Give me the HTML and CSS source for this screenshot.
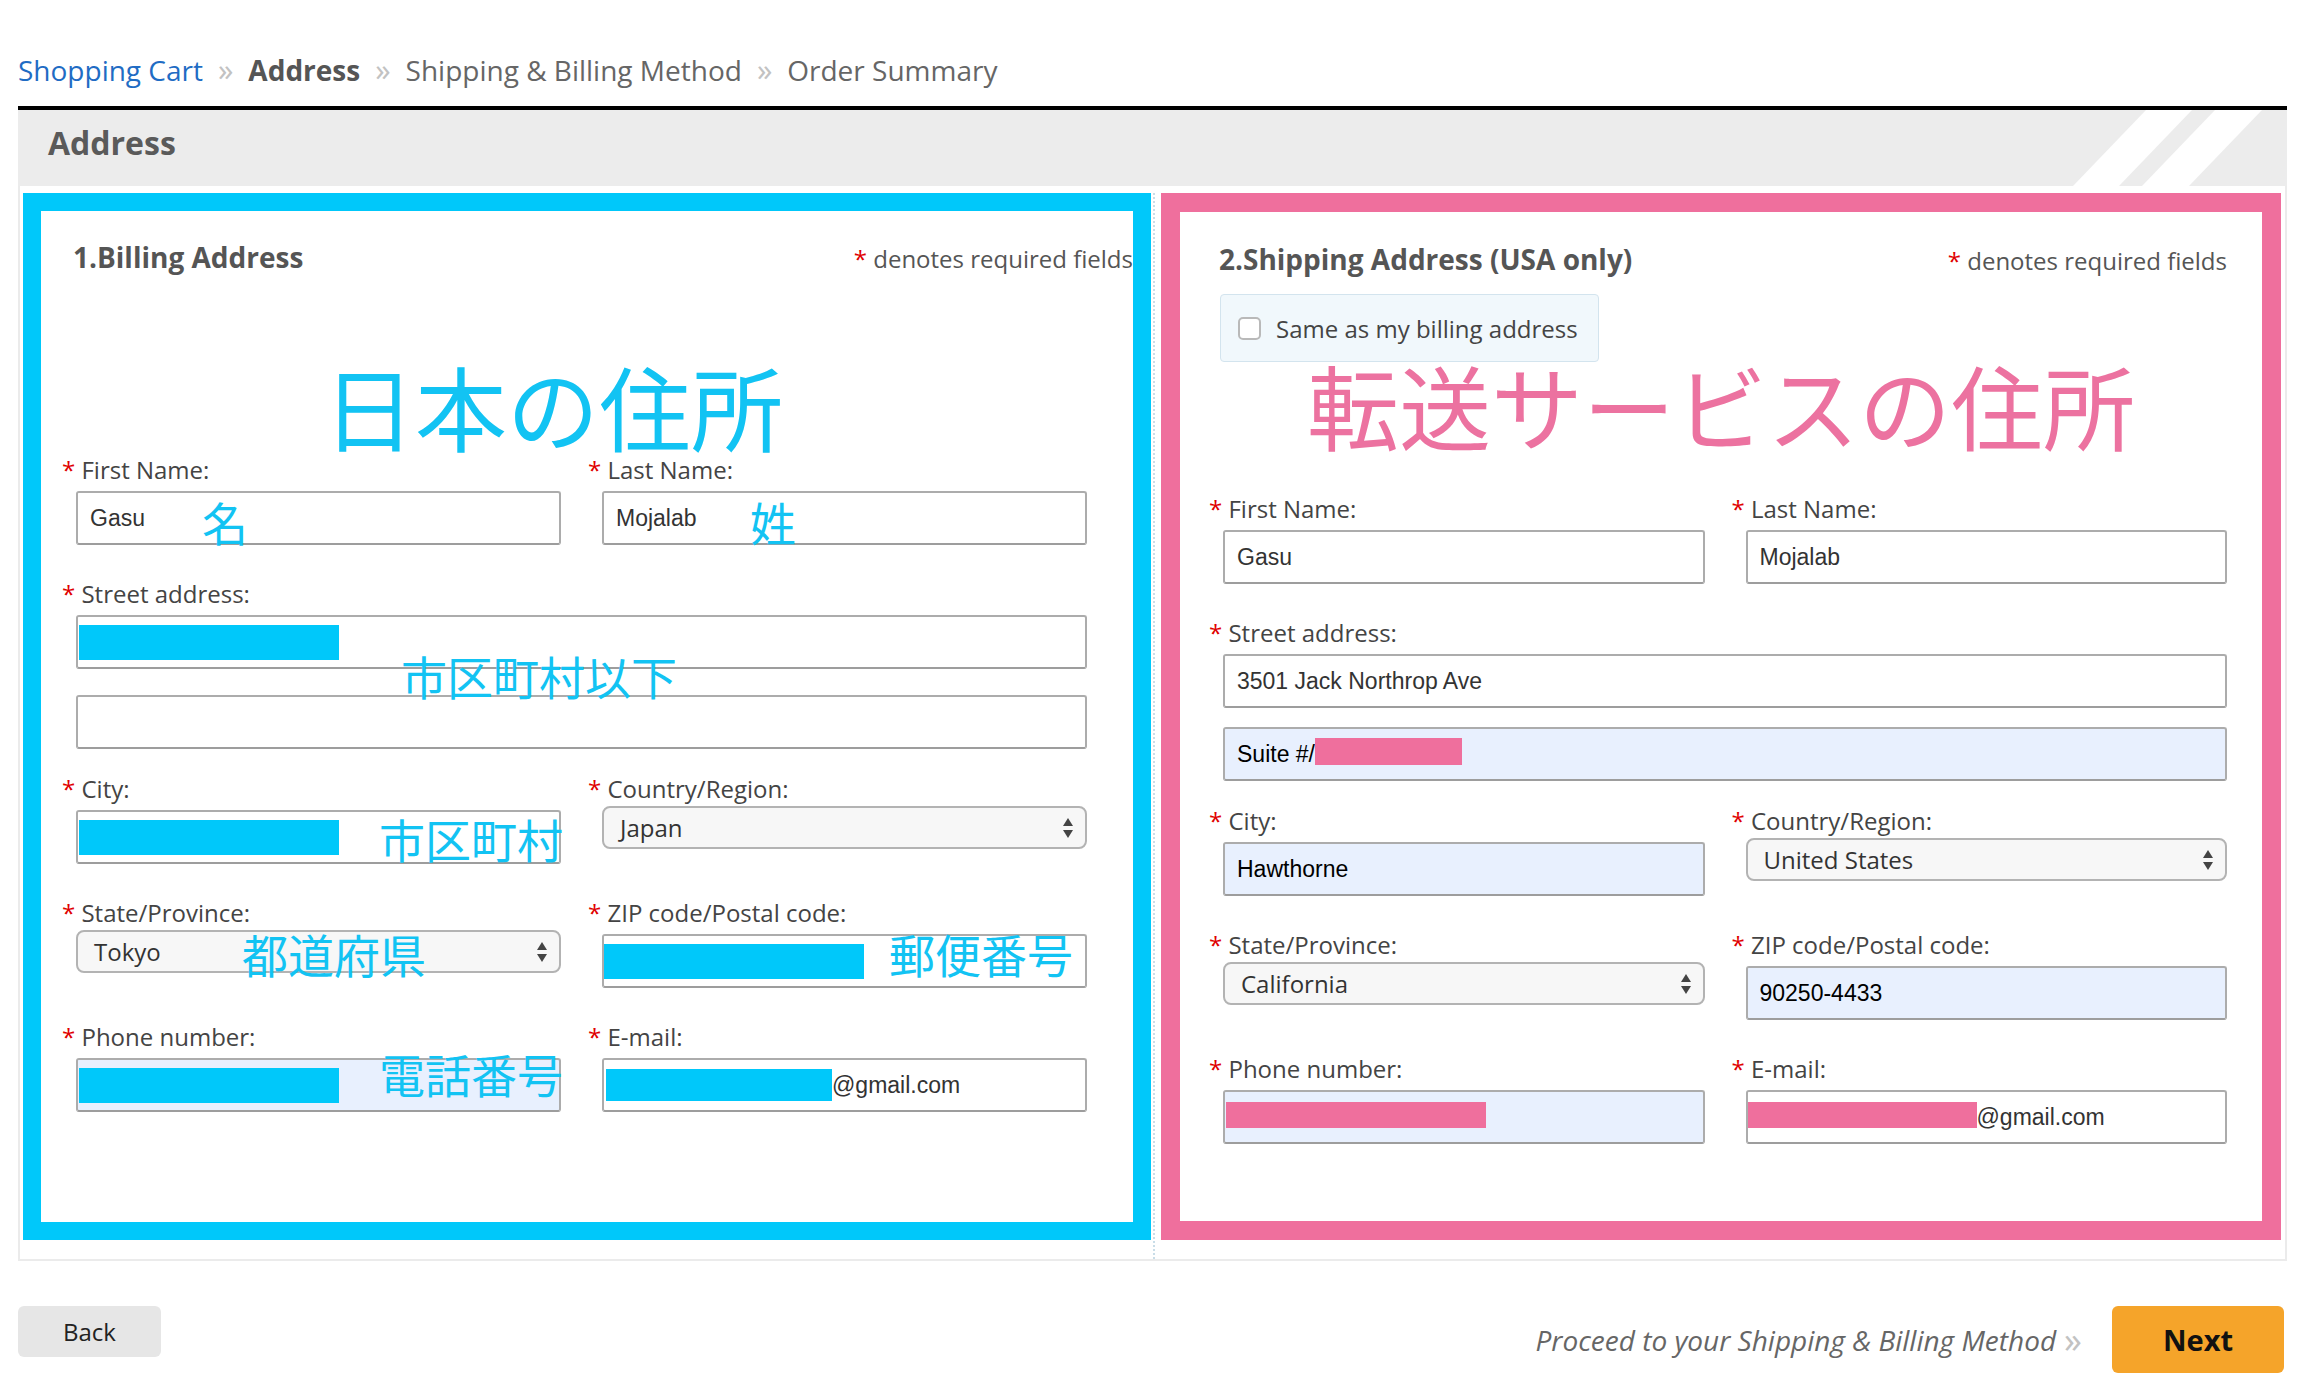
FILE: index.html
```html
<!DOCTYPE html>
<html lang="en">
<head>
<meta charset="utf-8">
<title>Address</title>
<link rel="stylesheet" href="styles.css">
</head>
<body>
<nav class="crumbs">
  <a class="crumb crumb--link">Shopping Cart</a><span class="sep">»</span><span class="crumb crumb--current">Address</span><span class="sep">»</span><span class="crumb">Shipping &amp; Billing Method</span><span class="sep">»</span><span class="crumb">Order Summary</span>
</nav>

<section class="checkout">
  <header class="checkout-head">
    <h1>Address</h1>
    <svg class="stripes" width="265" height="76" viewBox="0 0 265 76" aria-hidden="true">
      <polygon points="124,0 170,0 97,76 51,76" fill="#fff"/>
      <polygon points="193,0 240,0 167,76 120,76" fill="#fff"/>
    </svg>
  </header>

  <div class="panels">
    <div class="panel panel--bill">
      <div class="panel-head">
        <h2>1.Billing Address</h2>
        <p class="req"><span class="star">*</span> denotes required fields</p>
      </div>
      <div class="fields fields--bill">
        <div class="field">
          <label><span class="star">*</span> First Name:</label>
          <div class="input">Gasu</div>
        </div>
        <div class="field">
          <label><span class="star">*</span> Last Name:</label>
          <div class="input">Mojalab</div>
        </div>
        <div class="field field--wide field--street">
          <label><span class="star">*</span> Street address:</label>
          <div class="input"><span class="redact redact--c redact--b1"></span></div>
          <div class="input input--second"></div>
        </div>
        <div class="field">
          <label><span class="star">*</span> City:</label>
          <div class="input"><span class="redact redact--c redact--b1"></span></div>
        </div>
        <div class="field">
          <label><span class="star">*</span> Country/Region:</label>
          <div class="select">Japan<svg class="arrows" width="10" height="22" viewBox="0 0 10 22"><polygon points="0,9 5,1 10,9" fill="#444"/><polygon points="0,13 5,21 10,13" fill="#444"/></svg></div>
        </div>
        <div class="field">
          <label><span class="star">*</span> State/Province:</label>
          <div class="select">Tokyo<svg class="arrows" width="10" height="22" viewBox="0 0 10 22"><polygon points="0,9 5,1 10,9" fill="#444"/><polygon points="0,13 5,21 10,13" fill="#444"/></svg></div>
        </div>
        <div class="field">
          <label><span class="star">*</span> ZIP code/Postal code:</label>
          <div class="input"><span class="redact redact--c redact--zip"></span></div>
        </div>
        <div class="field">
          <label><span class="star">*</span> Phone number:</label>
          <div class="input input--auto"><span class="redact redact--c redact--b1"></span></div>
        </div>
        <div class="field">
          <label><span class="star">*</span> E-mail:</label>
          <div class="input"><span class="redact redact--c redact--mail"></span>@gmail.com</div>
        </div>
      </div>

      <span class="note note--big note--jp">日本の住所</span>
      <span class="note note--jp note--first">名</span>
      <span class="note note--jp note--last">姓</span>
      <span class="note note--jp note--street">市区町村以下</span>
      <span class="note note--jp note--city">市区町村</span>
      <span class="note note--jp note--pref">都道府県</span>
      <span class="note note--jp note--zip">郵便番号</span>
      <span class="note note--jp note--phone">電話番号</span>
    </div>

    <div class="divider"></div>

    <div class="panel panel--ship">
      <div class="panel-head">
        <h2>2.Shipping Address (USA only)</h2>
        <p class="req"><span class="star">*</span> denotes required fields</p>
      </div>
      <div class="same">
        <span class="checkbox"></span>
        <span>Same as my billing address</span>
      </div>
      <div class="fields fields--ship">
        <div class="field">
          <label><span class="star">*</span> First Name:</label>
          <div class="input">Gasu</div>
        </div>
        <div class="field">
          <label><span class="star">*</span> Last Name:</label>
          <div class="input">Mojalab</div>
        </div>
        <div class="field field--wide field--street">
          <label><span class="star">*</span> Street address:</label>
          <div class="input">3501 Jack Northrop Ave</div>
          <div class="input input--second input--auto">Suite #/<span class="redact redact--p redact--suite"></span></div>
        </div>
        <div class="field">
          <label><span class="star">*</span> City:</label>
          <div class="input input--auto">Hawthorne</div>
        </div>
        <div class="field">
          <label><span class="star">*</span> Country/Region:</label>
          <div class="select">United States<svg class="arrows" width="10" height="22" viewBox="0 0 10 22"><polygon points="0,9 5,1 10,9" fill="#444"/><polygon points="0,13 5,21 10,13" fill="#444"/></svg></div>
        </div>
        <div class="field">
          <label><span class="star">*</span> State/Province:</label>
          <div class="select">California<svg class="arrows" width="10" height="22" viewBox="0 0 10 22"><polygon points="0,9 5,1 10,9" fill="#444"/><polygon points="0,13 5,21 10,13" fill="#444"/></svg></div>
        </div>
        <div class="field">
          <label><span class="star">*</span> ZIP code/Postal code:</label>
          <div class="input input--auto">90250-4433</div>
        </div>
        <div class="field">
          <label><span class="star">*</span> Phone number:</label>
          <div class="input input--auto"><span class="redact redact--p redact--phone"></span></div>
        </div>
        <div class="field">
          <label><span class="star">*</span> E-mail:</label>
          <div class="input"><span class="redact redact--p redact--pmail"></span>@gmail.com</div>
        </div>
      </div>

      <span class="note note--big note--us">転送サービスの住所</span>
    </div>
  </div>
</section>

<footer class="actions">
  <button class="btn btn--back">Back</button>
  <div class="proceed">
    <span class="proceed-text">Proceed to your Shipping &amp; Billing Method</span>
    <span class="proceed-sep">»</span>
    <button class="btn btn--next">Next</button>
  </div>
</footer>
</body>
</html>
```

FILE: styles.css
```css
* { box-sizing: border-box; }

html, body {
  margin: 0;
  padding: 0;
  background: #fff;
}

body {
  font-family: "Open Sans", "Liberation Sans", sans-serif;
  color: #444;
  width: 2305px;
  height: 1386px;
  overflow: hidden;
}

/* breadcrumb */
.crumbs {
  padding: 49px 18px 0;
  margin-bottom: 16px;
  font-size: 28px;
  line-height: 40px;
  color: #666;
  white-space: nowrap;
}
.crumb--link { color: #1f6cc4; }
.crumb--current { font-weight: 700; color: #555; }
.sep {
  color: #c2c2c2;
  margin: 0 15px;
  font-size: 31px;
}

/* checkout box */
.checkout {
  margin: 0 18px;
  border: 2px solid #ebebeb;
  border-top: 0;
}
.checkout-head {
  position: relative;
  margin: 0 -2px;
  border-top: 4px solid #000;
  background: #ececec;
  height: 80px;
}
.checkout-head h1 {
  margin: 0;
  padding: 11px 0 0 30px;
  font-size: 32px;
  line-height: 44px;
  font-weight: 700;
  color: #5a5a5a;
}
.stripes {
  position: absolute;
  right: 0;
  top: 0;
}

.panels {
  display: flex;
  align-items: stretch;
  padding: 7px 3px 19px 3px;
}

.panel {
  position: relative;
  min-height: 1047px;
}
.panel--bill {
  width: 1128px;
  border: 18px solid #00c8fa;
  padding: 28px 0 0 21px;
}
.panel--ship {
  width: 1120px;
  border: 19px solid #ef6f9d;
  padding: 29px 35px 0 29px;
}

.divider {
  width: 10px;
  position: relative;
}
.divider::before {
  content: "";
  position: absolute;
  left: 2px;
  top: 0;
  bottom: -19px;
  border-left: 2px dotted #c9dde8;
}

.panel-head {
  display: flex;
  justify-content: space-between;
  align-items: baseline;
}
.panel--bill .panel-head { padding-left: 11px; margin-bottom: 178px; }
.panel--ship .panel-head { padding-left: 10px; }
.panel-head h2 {
  margin: 0;
  font-size: 28px;
  line-height: 36px;
  font-weight: 700;
  color: #555;
}
.req {
  margin: 0;
  font-size: 24px;
  line-height: 34px;
  color: #555;
}
.star { color: #e00000; }

.same {
  display: flex;
  align-items: center;
  gap: 15px;
  width: 379px;
  height: 68px;
  margin: 16px 0 131px 11px;
  padding-left: 17px;
  background: #f1f8fc;
  border: 1px solid #d3e4ee;
  border-radius: 4px;
  font-size: 24px;
  color: #444;
}
.checkbox {
  width: 23px;
  height: 23px;
  background: #fff;
  border: 2px solid #b9b9b9;
  border-radius: 5px;
}

/* form grid */
.fields {
  display: grid;
  grid-template-columns: 1fr 1fr;
  column-gap: 27px;
  align-items: start;
}
.fields--bill { margin-right: 46px; }

.field { margin-bottom: 33px; }
.field--wide { grid-column: 1 / -1; }
.field--street { margin-bottom: 24px; }

.field label {
  display: block;
  font-size: 24px;
  line-height: 32px;
  margin-bottom: 5px;
  color: #444;
  white-space: nowrap;
}

.input {
  display: flex;
  align-items: center;
  height: 54px;
  margin-left: 14px;
  padding: 0 12px;
  background: #fff;
  border: 2px solid #acacac;
  border-bottom-color: #9d9d9d;
  border-radius: 3px;
  font-family: "Liberation Sans", Arial, sans-serif;
  font-size: 23px;
  color: #333;
  white-space: nowrap;
  overflow: hidden;
}
.input--auto {
  background: #e8f0fe;
  color: #000;
}
.fields--bill .input--second { margin-top: 26px; }
.fields--ship .input--second { margin-top: 19px; }

.select {
  position: relative;
  display: flex;
  align-items: center;
  height: 43px;
  margin-left: 14px;
  margin-top: -4px;
  padding-left: 16px;
  background: #f7f7f7;
  border: 2px solid #b3b3b3;
  border-radius: 8px;
  font-size: 24px;
  color: #333;
}
.arrows {
  position: absolute;
  right: 12px;
  top: 50%;
  margin-top: -11px;
}

/* redaction blocks */
.redact { display: block; flex: none; }
.redact--c { background: #00c8fa; }
.redact--p { background: #ef6f9d; }
.redact--b1 { width: 260px; height: 35px; margin-left: -11px; }
.redact--zip { width: 261px; height: 35px; margin-left: -13px; }
.redact--mail { width: 226px; height: 32px; margin-left: -10px; }
.redact--suite { width: 147px; height: 27px; margin-top: -6px; }
.redact--phone { width: 260px; height: 26px; margin-left: -11px; margin-top: -4px; }
.redact--pmail { width: 230px; height: 26px; margin-left: -13px; margin-top: -4px; }

/* annotations drawn over the form */
.note {
  position: absolute;
  font-family: "Noto Sans CJK JP", "Noto Sans CJK SC", sans-serif;
  font-size: 46px;
  line-height: 1;
  white-space: nowrap;
}
.note--jp { color: #12c3f3; }
.note--us { color: #ec72a0; }
.note--big { font-size: 92px; }
.note--jp.note--big { left: 282px; top: 148px; }
.note--us.note--big { left: 127px; top: 146px; }
.note--first { left: 161px; top: 287px; }
.note--last { left: 709px; top: 287px; }
.note--street { left: 360px; top: 441px; }
.note--city { left: 338px; top: 604px; }
.note--pref { left: 201px; top: 719px; }
.note--zip { left: 848px; top: 719px; }
.note--phone { left: 338px; top: 839px; }

/* footer actions */
.actions {
  display: flex;
  justify-content: space-between;
  align-items: flex-start;
  margin-top: 45px;
  padding: 0 21px 0 18px;
}
.btn {
  border: 0;
  border-radius: 6px;
  font-family: "Open Sans", sans-serif;
  cursor: pointer;
}
.btn--back {
  height: 51px;
  padding: 0 45px;
  background: #e6e6e6;
  font-size: 24px;
  color: #222;
}
.proceed {
  display: flex;
  align-items: center;
}
.proceed-text {
  font-style: italic;
  font-size: 28px;
  color: #666;
}
.proceed-sep {
  margin-left: 8px;
  font-size: 36px;
  line-height: 1;
  color: #c2c2c2;
}
.btn--next {
  height: 67px;
  margin-left: 30px;
  padding: 0 51px;
  background: #f5a42a;
  font-size: 29px;
  font-weight: 700;
  color: #111;
}
```
